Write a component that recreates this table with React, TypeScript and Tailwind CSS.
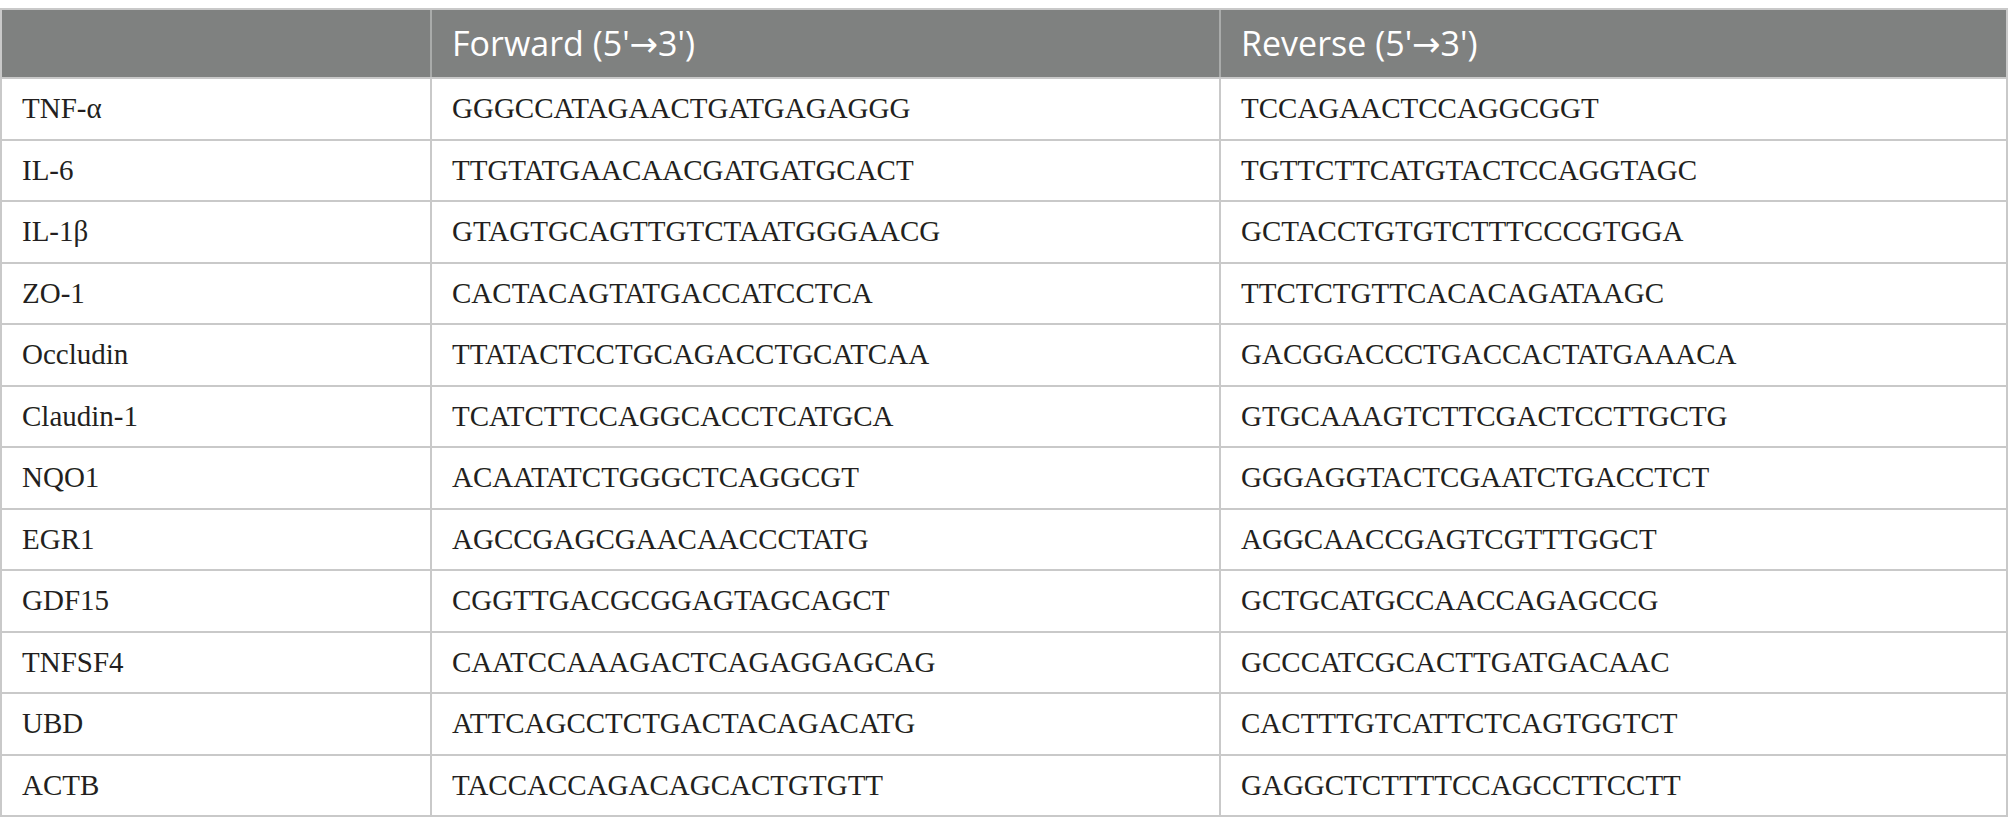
import React from "react";

const rows: [string, string, string][] = [
  ["TNF-α", "GGGCCATAGAACTGATGAGAGGG", "TCCAGAACTCCAGGCGGT"],
  ["IL-6", "TTGTATGAACAACGATGATGCACT", "TGTTCTTCATGTACTCCAGGTAGC"],
  ["IL-1β", "GTAGTGCAGTTGTCTAATGGGAACG", "GCTACCTGTGTCTTTCCCGTGGA"],
  ["ZO-1", "CACTACAGTATGACCATCCTCA", "TTCTCTGTTCACACAGATAAGC"],
  ["Occludin", "TTATACTCCTGCAGACCTGCATCAA", "GACGGACCCTGACCACTATGAAACA"],
  ["Claudin-1", "TCATCTTCCAGGCACCTCATGCA", "GTGCAAAGTCTTCGACTCCTTGCTG"],
  ["NQO1", "ACAATATCTGGGCTCAGGCGT", "GGGAGGTACTCGAATCTGACCTCT"],
  ["EGR1", "AGCCGAGCGAACAACCCTATG", "AGGCAACCGAGTCGTTTGGCT"],
  ["GDF15", "CGGTTGACGCGGAGTAGCAGCT", "GCTGCATGCCAACCAGAGCCG"],
  ["TNFSF4", "CAATCCAAAGACTCAGAGGAGCAG", "GCCCATCGCACTTGATGACAAC"],
  ["UBD", "ATTCAGCCTCTGACTACAGACATG", "CACTTTGTCATTCTCAGTGGTCT"],
  ["ACTB", "TACCACCAGACAGCACTGTGTT", "GAGGCTCTTTTCCAGCCTTCCTT"],
];

export default function App() {
  return (
    <div className="w-[2009px] h-[830px] bg-white pt-2">
      <div className="w-[2008px] border-2 border-[#c9c9c9]">
        <div
          className="grid grid-cols-[428px_789px_1fr] h-[67px] bg-[#7f8180] text-white text-[34px]"
          style={{ fontFamily: '"Open Sans", "DejaVu Sans", sans-serif' }}
        >
          <div />
          <div className="flex items-center pl-5 border-l-2 border-[#a9abaa]">
            Forward (5'→3')
          </div>
          <div className="flex items-center pl-5 border-l-2 border-[#a9abaa]">
            Reverse (5'→3')
          </div>
        </div>
        {rows.map((r) => (
          <div
            key={r[0]}
            className="grid grid-cols-[428px_789px_1fr] h-[61.5px] border-t-2 border-[#c9c9c9] text-[29px] text-[#231f20]"
            style={{ fontFamily: '"Liberation Serif", "DejaVu Serif", serif' }}
          >
            <div className="flex items-center pl-5">{r[0]}</div>
            <div className="flex items-center pl-5 border-l-2 border-[#c9c9c9]">{r[1]}</div>
            <div className="flex items-center pl-5 border-l-2 border-[#c9c9c9]">{r[2]}</div>
          </div>
        ))}
      </div>
    </div>
  );
}
